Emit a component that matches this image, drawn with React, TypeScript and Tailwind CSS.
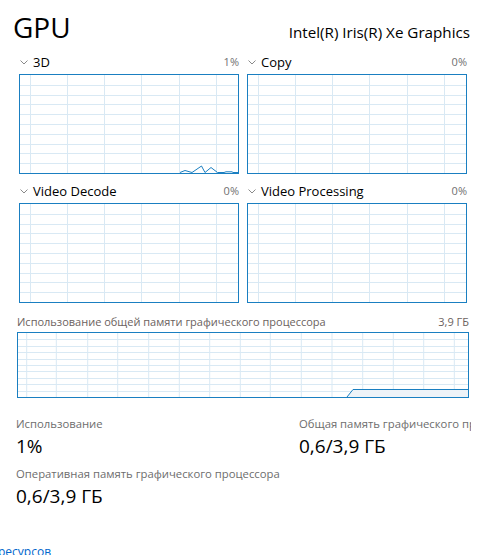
import React from "react";

const BLUE = "#1a7fc1";
const GRID = "#d9e9f4";

function Chevron() {
  return (
    <svg width="8" height="5" viewBox="0 0 8 5" className="shrink-0">
      <path d="M0.5 0.5 L4 4 L7.5 0.5" fill="none" stroke="#8a8a8a" strokeWidth="1" />
    </svg>
  );
}

function Grid({ w, h, xs, rows }: { w: number; h: number; xs: number[]; rows: number }) {
  const ys = Array.from({ length: rows - 1 }, (_, i) => ((i + 1) * h) / rows);
  return (
    <g>
      {xs.map((x) => (
        <line key={"x" + x} x1={x} y1={0} x2={x} y2={h} stroke={GRID} strokeWidth="1" />
      ))}
      {ys.map((y) => (
        <line key={"y" + y} x1={0} y1={Math.round(y) + 0.5} x2={w} y2={Math.round(y) + 0.5} stroke={GRID} strokeWidth="1" />
      ))}
    </g>
  );
}

const smallX = [11.5, 48.5, 85.5, 122.5, 160.5, 197.5];

function Chart({ line }: { line?: string }) {
  return (
    <div className="h-[100px] w-[220px] border border-[#1a7fc1]">
      <svg width="218" height="98" className="block">
        <Grid w={218} h={98} xs={smallX.map((x) => x - 1)} rows={10} />
        {line ? <polyline points={line} fill="none" stroke={BLUE} strokeWidth="1" /> : null}
      </svg>
    </div>
  );
}

function Engine({ name, pct, line }: { name: string; pct: string; line?: string }) {
  return (
    <div className="flex flex-col">
      <div className="flex h-[29px] items-center pl-[1px] pt-[6px]">
        <Chevron />
        <span className="ml-[5px] text-[13px] text-black">{name}</span>
        <span className="ml-auto text-[11px] text-[#707070]">{pct}</span>
      </div>
      <Chart line={line} />
    </div>
  );
}

function Stat({ label, value }: { label: string; value: string }) {
  return (
    <div className="flex flex-col overflow-hidden whitespace-nowrap">
      <span className="text-[11.3px] leading-[16px] text-[#6d6d6d]">{label}</span>
      <span className="mt-[2px] text-[19px] leading-[24px] text-black">{value}</span>
    </div>
  );
}

const memX = [8.7, 38.3, 69.7, 99.7, 130.7, 161.3, 191.7, 222.3, 252.3, 283.3, 314, 344.7, 375.3, 405.7, 436.3];

export default function App() {
  return (
    <div
      className="relative h-[555px] w-[483px] overflow-hidden bg-white"
      style={{ fontFamily: '"Open Sans", "Noto Sans", sans-serif' }}
    >
      <div className="flex items-baseline justify-between pl-[13px] pr-[13px] pt-[8px]">
        <span className="text-[28px] leading-[38px] text-black">GPU</span>
        <span className="text-[15.2px] text-black">Intel(R) Iris(R) Xe Graphics</span>
      </div>

      <div className="-mt-[1px] grid grid-cols-[220px_220px] gap-x-[8px] pl-[19px]">
        <Engine
          name="3D"
          pct="1%"
          line="160,97.5 165,95.5 172,97.5 181.5,91 185,97.5 191,92.5 197.5,97.5 204,97.5 206,96.8 212,96.8 213,97.5 218,97.5"
        />
        <Engine name="Copy" pct="0%" />
        <Engine name="Video Decode" pct="0%" />
        <Engine name="Video Processing" pct="0%" />
      </div>

      <div className="mt-[11px] pl-[17px] pr-[14px]">
        <div className="flex items-center justify-between pb-[2px] text-[11px] leading-[16px] text-[#6b625e]">
          <span>Использование общей памяти графического процессора</span>
          <span>3,9 ГБ</span>
        </div>
        <div className="h-[66px] w-[452px] border border-[#1a7fc1]">
          <svg width="450" height="64" className="block">
            <Grid w={450} h={64} xs={memX} rows={10} />
            <polygon points="329,64 335,56.5 450,56.5 450,64" fill="#eef3f8" />
            <polyline points="329,64 335,56.5 450,56.5" fill="none" stroke={BLUE} strokeWidth="1" />
          </svg>
        </div>
      </div>

      <div className="mt-[18px] grid grid-cols-[283px_172px] pl-[16px]">
        <Stat label="Использование" value="1%" />
        <Stat label="Общая память графического процессора" value="0,6/3,9 ГБ" />
        <div className="mt-[8px]">
          <Stat label="Оперативная память графического процессора" value="0,6/3,9 ГБ" />
        </div>
      </div>

      <a className="absolute bottom-[-6px] left-[-2px] text-[12px] text-[#0066cc]">ресурсов</a>
    </div>
  );
}
